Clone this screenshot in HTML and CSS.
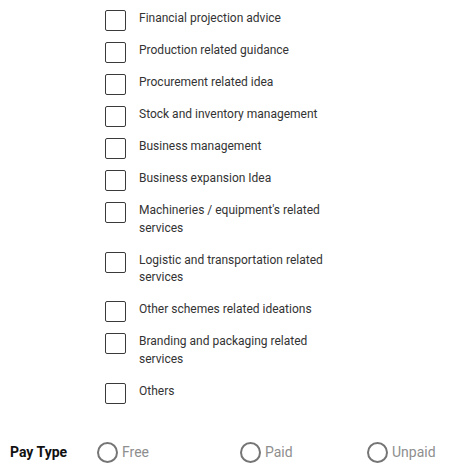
FILE: index.html
```html
<!DOCTYPE html>
<html lang="en">
<head>
<meta charset="utf-8">
<title>Services</title>
<link rel="stylesheet" href="styles.css">
</head>
<body>
<div class="page">
  <ul class="options">
    <li class="option"><span class="box"></span><span class="label">Financial projection advice</span></li>
    <li class="option"><span class="box"></span><span class="label">Production related guidance</span></li>
    <li class="option"><span class="box"></span><span class="label">Procurement related idea</span></li>
    <li class="option"><span class="box"></span><span class="label">Stock and inventory management</span></li>
    <li class="option"><span class="box"></span><span class="label">Business management</span></li>
    <li class="option"><span class="box"></span><span class="label">Business expansion Idea</span></li>
    <li class="option"><span class="box"></span><span class="label">Machineries / equipment's related services</span></li>
    <li class="option"><span class="box"></span><span class="label">Logistic and transportation related services</span></li>
    <li class="option"><span class="box"></span><span class="label">Other schemes related ideations</span></li>
    <li class="option"><span class="box"></span><span class="label">Branding and packaging related services</span></li>
    <li class="option"><span class="box"></span><span class="label">Others</span></li>
  </ul>
  <div class="pay">
    <span class="pay-title">Pay Type</span>
    <label class="radio"><span class="circle"></span><span class="radio-text">Free</span></label>
    <label class="radio"><span class="circle"></span><span class="radio-text">Paid</span></label>
    <label class="radio"><span class="circle"></span><span class="radio-text">Unpaid</span></label>
  </div>
</div>
</body>
</html>
```
FILE: styles.css
```css
html, body {
  margin: 0;
  padding: 0;
  background: #ffffff;
}
body {
  font-family: Roboto, "Liberation Sans", Arial, sans-serif;
}
.page {
  padding-top: 9px;
}
.options {
  list-style: none;
  margin: 0;
  padding: 0 0 0 105px;
  display: flex;
  flex-direction: column;
  gap: 10px;
}
.option {
  display: flex;
  align-items: flex-start;
  gap: 13px;
}
.box {
  flex: none;
  box-sizing: border-box;
  width: 21px;
  height: 21px;
  margin-top: 1px;
  border: 1px solid #3a3a3a;
  border-radius: 2px;
}
.label {
  width: 200px;
  font-size: 12px;
  line-height: 17.83px;
  color: #333333;
  padding-top: 1px;
  padding-bottom: 3px;
}
.pay {
  margin-top: 38px;
  display: grid;
  grid-template-columns: 87px 143px 127px auto;
  align-items: center;
  padding-left: 10px;
  height: 21px;
}
.pay-title {
  font-size: 14px;
  font-weight: 700;
  color: #111111;
}
.radio {
  display: flex;
  align-items: center;
  gap: 4px;
}
.circle {
  box-sizing: border-box;
  width: 21px;
  height: 21px;
  border: 2px solid #757575;
  border-radius: 50%;
}
.radio-text {
  font-size: 14px;
  color: #8e8e8e;
}
```
